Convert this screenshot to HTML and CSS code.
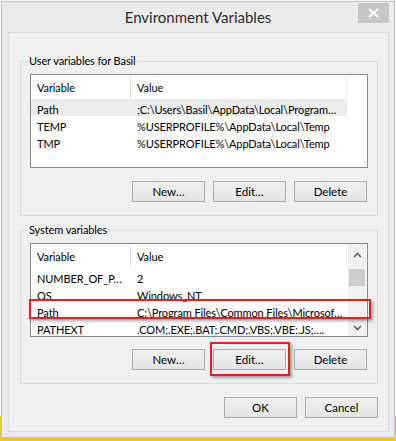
FILE: index.html
```html
<!DOCTYPE html>
<html>
<head>
<meta charset="utf-8">
<link rel="stylesheet" href="styles.css">
</head>
<body>
<div class="window">
  <div class="titlebar">
    <div class="title">Environment Variables</div>
    <div class="close"><svg width="11" height="10" viewBox="0 0 11 10"><path d="M1 1 L10 9 M10 1 L1 9" stroke="#fff" stroke-width="2.2" fill="none"/></svg></div>
  </div>
  <div class="client">
    <fieldset class="group">
      <legend>User variables for Basil</legend>
      <div class="list">
        <div class="list-head">
          <div class="c-var">Variable</div>
          <div class="c-val">Value</div>
          <div class="c-end"></div>
        </div>
        <div class="row sel"><div class="c-var">Path</div><div class="c-val">;C:\Users\Basil\AppData\Local\Program…</div></div>
        <div class="row"><div class="c-var">TEMP</div><div class="c-val">%USERPROFILE%\AppData\Local\Temp</div></div>
        <div class="row"><div class="c-var">TMP</div><div class="c-val">%USERPROFILE%\AppData\Local\Temp</div></div>
      </div>
      <div class="btns">
        <button class="btn">New…</button>
        <button class="btn">Edit…</button>
        <button class="btn">Delete</button>
      </div>
    </fieldset>
    <fieldset class="group group-sys">
      <legend>System variables</legend>
      <div class="list list-scroll">
        <div class="list-body">
          <div class="list-head">
            <div class="c-var">Variable</div>
            <div class="c-val">Value</div>
          </div>
          <div class="row"><div class="c-var">NUMBER_OF_P…</div><div class="c-val">2</div></div>
          <div class="row"><div class="c-var">OS</div><div class="c-val">Windows_NT</div></div>
          <div class="row"><div class="c-var">Path</div><div class="c-val">C:\Program Files\Common Files\Microsof…</div></div>
          <div class="row"><div class="c-var">PATHEXT</div><div class="c-val">.COM;.EXE;.BAT;.CMD;.VBS;.VBE;.JS;….</div></div>
        </div>
        <div class="scrollbar">
          <div class="sb-btn"><svg width="9" height="6" viewBox="0 0 9 6"><path d="M1 5 L4.5 1.5 L8 5" stroke="#606060" stroke-width="1.6" fill="none"/></svg></div>
          <div class="sb-track"><div class="sb-thumb"></div></div>
          <div class="sb-btn"><svg width="9" height="6" viewBox="0 0 9 6"><path d="M1 1 L4.5 4.5 L8 1" stroke="#606060" stroke-width="1.6" fill="none"/></svg></div>
        </div>
      </div>
      <div class="btns">
        <button class="btn">New…</button>
        <button class="btn">Edit…</button>
        <button class="btn">Delete</button>
      </div>
    </fieldset>
    <div class="footer">
      <button class="btn">OK</button>
      <button class="btn">Cancel</button>
    </div>
  </div>
  <div class="mark mark-path"></div>
  <div class="mark mark-edit"></div>
</div>
</body>
</html>
```
FILE: styles.css
```css
html, body {
  margin: 0;
  padding: 0;
}
body {
  width: 396px;
  height: 441px;
  overflow: hidden;
  background: linear-gradient(to bottom, #f6f6f6 0, #f6f6f6 416px, #f4c233 416px);
  font-family: Lato, "Noto Sans", sans-serif;
  font-size: 11px;
  letter-spacing: -0.1px;
  color: #000;
}
.window {
  position: relative;
  margin: 1px 0 0 1px;
  width: 392px;
  height: 435px;
  border: 1px solid #c4c4c4;
  background: #ebebeb;
  display: flex;
  flex-direction: column;
}
.titlebar {
  height: 30px;
  display: grid;
  grid-template-columns: 1fr auto 1fr;
  align-items: start;
}
.title {
  grid-column: 2;
  font-size: 15px;
  letter-spacing: 0;
  line-height: 30px;
  color: #2b2b2b;
}
.close {
  grid-column: 3;
  justify-self: end;
  margin: 1px 5px 0 0;
  width: 31px;
  height: 20px;
  background: #c7c7c7;
  display: flex;
  align-items: center;
  justify-content: center;
}
.client {
  margin: 0 5px 5px 6px;
  flex: 1;
  border: 1px solid #d9d9d9;
  background: #f0f0f0;
  padding: 20px 10px 0 11px;
  display: flex;
  flex-direction: column;
}
.group {
  margin: 0;
  padding: 5px 9px 13px 9px;
  border: 1px solid #dcdcdc;
  min-inline-size: 0;
}
.group legend {
  padding: 0 1px 0 2px;
  margin-left: -3px;
  line-height: 16px;
  height: 16px;
}
.group-sys {
  margin-top: 6px;
}
.list {
  height: 92px;
  border: 1px solid #828790;
  background: #fff;
  overflow: hidden;
}
.list-scroll {
  display: flex;
}
.list-body {
  width: 317px;
  flex-shrink: 0;
}
.list-head {
  display: flex;
  height: 24px;
  line-height: 25px;
}
.list-head .c-var {
  flex-shrink: 0;
  width: 93px;
  padding-left: 6px;
  border-right: 1px solid #e5e5e5;
}
.list-head .c-val {
  flex-shrink: 0;
  width: 209px;
  padding-left: 6px;
  border-right: 1px solid #e8eef7;
}
.row {
  display: flex;
  width: 316px;
  height: 15px;
  padding-top: 2px;
  line-height: 18px;
  white-space: nowrap;
}
.row.sel {
  background: #ececec;
}
.row .c-var {
  flex-shrink: 0;
  width: 94px;
  padding-left: 6px;
}
.row .c-val {
  padding-left: 6px;
  overflow: hidden;
}
.scrollbar {
  width: 18px;
  background: #f0f0f0;
  display: flex;
  flex-direction: column;
}
.sb-btn {
  height: 17px;
  padding-top: 2px;
  display: flex;
  align-items: center;
  justify-content: center;
}
.sb-track {
  flex: 1;
  padding-top: 6px;
}
.sb-thumb {
  margin: 0 1px 0 1px;
  height: 17px;
  background: #cdcdcd;
}
.btns {
  display: flex;
  justify-content: flex-end;
  gap: 8px;
  margin: 13px 1px 0 0;
}
.group-sys .btns {
  margin-top: 12px;
}
.btn {
  width: 73px;
  height: 21px;
  margin: 0;
  padding: 0;
  border: 1px solid #adadad;
  border-radius: 0;
  background: linear-gradient(to bottom, #f0f0f0, #e5e5e5);
  font-family: Lato, "Noto Sans", sans-serif;
  font-size: 11.5px;
  letter-spacing: 0;
  color: #000;
  line-height: 19px;
}
.footer {
  display: flex;
  justify-content: flex-end;
  gap: 8px;
  margin-top: 13px;
}
.mark {
  position: absolute;
  border: 2px solid #ec1c24;
  box-shadow: 2px 2px 3px rgba(0,0,0,0.35);
}
.mark-path {
  left: 27px;
  top: 297px;
  width: 338px;
  height: 16px;
}
.mark-edit {
  left: 208px;
  top: 340px;
  width: 76px;
  height: 30px;
}
```
